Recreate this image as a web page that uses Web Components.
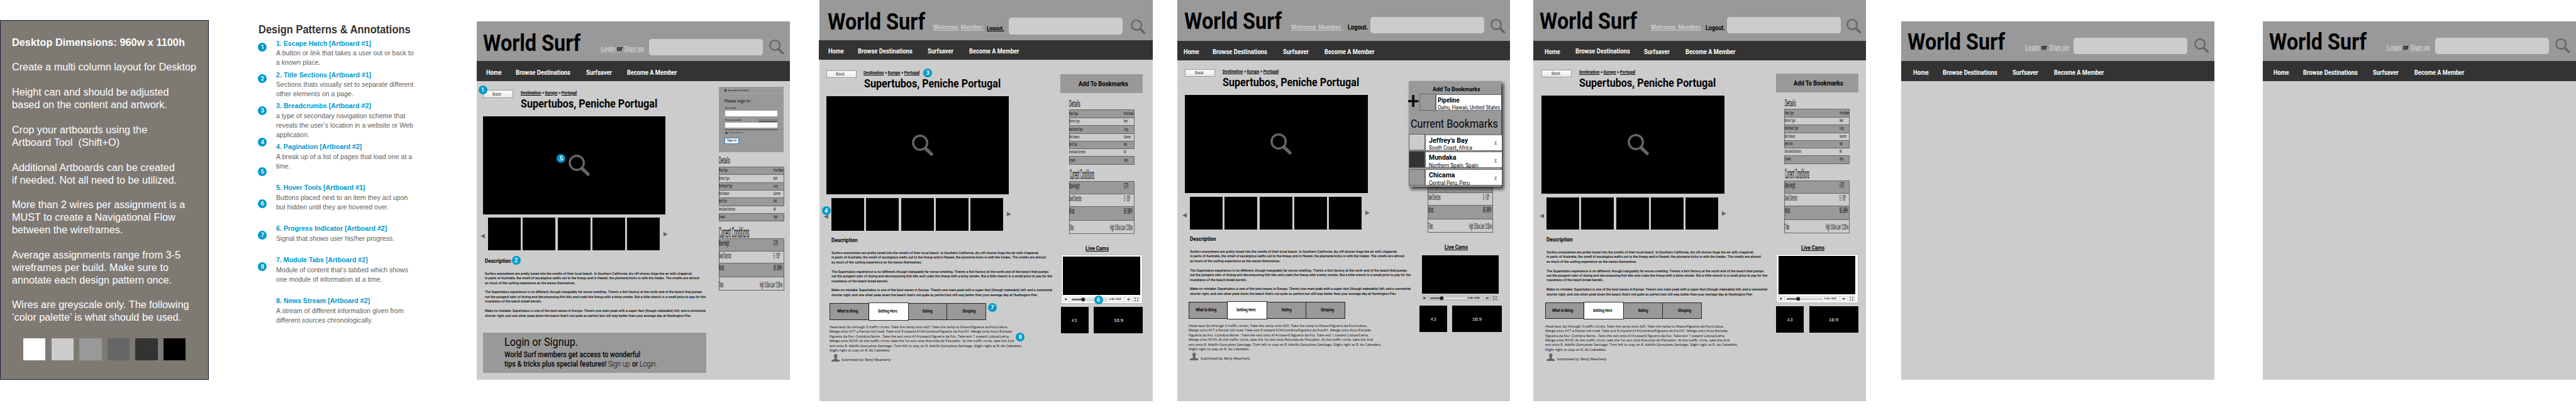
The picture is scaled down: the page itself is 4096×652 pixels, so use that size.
<!DOCTYPE html>
<html lang="en">
<head>
<meta charset="utf-8">
<title>World Surf wireframes</title>
<style>
/* 1rem = 100 design units; the whole canvas is 7898 units wide */
html{font-size:calc(100vw / 78.98);background:#fff;overflow:hidden}
body{margin:0;font-family:Roboto,"Liberation Sans",sans-serif;color:#000}
</style>
</head>
<body>
<design-canvas></design-canvas>
<script>
const r = n => (n / 100).toFixed(4) + 'rem';
const BASE = `*{box-sizing:border-box}:host{display:block}
.col{display:flex;flex-direction:column;align-items:flex-start}
.row{display:flex;align-items:flex-start}
.col>div,.row>div{flex:none}
.b{font-weight:700}.m{font-weight:500}.u{text-decoration:underline}.lt{color:#ccc}
.ar{font-family:"Liberation Sans",Arial,sans-serif}
u{text-decoration:underline}svg{display:block;width:100%;height:100%}`;

/* vertical stack: items are [x, y, height, html], y counted from y0 */
const S = (y0, items) => {
  let p = y0;
  return '<div class="col">' + items.map(([x, y, h, html]) => {
    const m = y - p; p = y + h;
    return `<div style="margin:${r(m)} 0 0 ${r(x)};height:${r(h)}">${html}</div>`;
  }).join('') + '</div>';
};
/* horizontal run: items are [x, y, width, html], x counted from x0 */
const R = (x0, items) => {
  let p = x0;
  return '<div class="row">' + items.map(([x, y, w, html]) => {
    const m = x - p; p = x + w;
    return `<div style="margin:${r(y)} 0 0 ${r(m)};width:${r(w)}">${html}</div>`;
  }).join('') + '</div>';
};
const T = (w, fs, text, cls = '', lh = fs * 1.2) => `<fit-line class="${cls}" w="${w}" fs="${fs}" lh="${lh}">${text}</fit-line>`;
/* text as a stack item / run item, placed by the centre of its capitals */
const st = (x, c, w, fs, text, cls) => [x, c - fs * .6, fs * 1.2, T(w, fs, text, cls)];
const rt = (x, c, w, fs, text, cls) => [x, c - fs * .6, w, T(w, fs, text, cls)];
const box = (w, h, style = 'background:#000', inner = '') => `<div style="width:${r(w)};height:${r(h)};${style}">${inner}</div>`;

class Ui extends HTMLElement {
  constructor() { super(); this.attachShadow({ mode: 'open' }); }
  connectedCallback() { this.shadowRoot.innerHTML = `<style>${BASE}${this.css()}</style>${this.html()}`; }
  css() { return ''; }
  html() { return '<slot></slot>'; }
  get v() { return this.getAttribute('v'); }
}

/* one line of text, condensed or widened to a set width */
const lines = [];
class FitLine extends Ui {
  css() {
    return `:host{width:${r(+this.getAttribute('w'))};height:${r(+this.getAttribute('lh'))};font-size:${r(+this.getAttribute('fs'))};line-height:${r(+this.getAttribute('lh'))};flex:none}
    :host(.b){font-weight:700}:host(.m){font-weight:500}:host(.l){font-weight:300}:host(.u){text-decoration:underline}:host(.lt){color:#ccc}
    :host(.w){color:#fff}:host(.ar){font-family:"Liberation Sans",Arial,sans-serif}:host(.my){font-family:"Open Sans","Noto Sans",sans-serif}
    span{display:inline-block;white-space:pre;transform-origin:0 0;text-decoration:inherit}`;
  }
  html() { return '<span><slot></slot></span>'; }
  connectedCallback() { super.connectedCallback(); lines.push(this); }
  fit() {
    const s = this.shadowRoot.querySelector('span');
    const w = s.getBoundingClientRect().width;
    if (w) s.style.transform = `scaleX(${this.getBoundingClientRect().width / w})`;
  }
}

class PinBadge extends Ui {
  css() { return `:host{width:.27rem;height:.27rem;border-radius:50%;background:#09c;color:#fff;display:flex;align-items:center;justify-content:center;font:600 .19rem/1 Roboto,sans-serif}
    :host([x]){position:absolute;left:${r(+this.getAttribute('x'))};top:${r(+this.getAttribute('y'))}}`; }
}

class SearchIcon extends Ui {
  html() { return `<svg viewBox="0 0 46 46" preserveAspectRatio="none"><circle cx="17.6" cy="17.4" r="15.1" fill="none" stroke="#666" stroke-width="4.6"/><path d="M25.5 31 29.5 26.2 33 28.2 45 40.3Q46.2 42 44.6 43.8 42.6 46 40.3 45.2L28 33.6Z" fill="#666"/></svg>`; }
  css() { return ':host{height:100%}'; }
}

/* left instruction panel */
class BriefPanel extends Ui {
  css() { return `:host{width:6.41rem;height:11.04rem;margin-top:.61rem;background:#7e7973;box-shadow:inset 0 0 0 1px #1c1c3a;color:#fff;flex:none}
    .sw{display:flex;gap:.18rem;padding-left:.715rem}.sw i{width:.68rem;height:.675rem}`; }
  html() {
    const L = [[0, 530, '<b>Desktop Dimensions: 960w x 1100h</b>'], [2, 565, 'Create a multi column layout for Desktop'], [4, 481, 'Height can and should be adjusted'], [5, 476, 'based on the content and artwork.'], [7, 415, 'Crop your artboards using the'], [8, 330, 'Artboard Tool  (Shift+O)'], [10, 499, 'Additional Artboards can be created'], [11, 505, 'if needed. Not all need to be utilized.'], [13, 531, 'More than 2 wires per assignment is a'], [14, 501, 'MUST to create a Navigational Flow'], [15, 340, 'between the wireframes.'], [17, 517, 'Average assignments range from 3-5'], [18, 480, 'wireframes per build. Make sure to'], [19, 490, 'annotate each design pattern once.'], [21, 543, 'Wires are greyscale only. The following'], [22, 519, '‘color palette’ is what should be used.']];
    const it = L.map(([n, w, t]) => st(37.5, 69.7 + n * 38.37, w, 32.5, t, 'ar'));
    it.push([0, 976.5, 68, '<div class="sw">' + ['#fff', '#ccc', '#999', '#666', '#333', '#000'].map(c => `<i style="background:${c}"></i>`).join('') + '</div>']);
    return S(0, it);
  }
}

class PatternNotes extends Ui {
  css() { return `:host{width:5rem;margin-left:1.5rem;flex:none;color:#5e5e5e}
    .t{color:#09c}.h{color:#333}`; }
  html() {
    const D = [[['1. Escape Hatch [Artboard #1]', 291], ['A button or link that takes a user out or back to', 422], ['a known place.', 136]],
    [['2. Title Sections [Artboard #1]', 292], ['Sections thats visually set to separate different', 421], ['other elements on a page.', 237]],
    [['3. Breadcrumbs [Artboard #2]', 291], ['a type of secondary navigation scheme that', 396], ['reveals the user’s location in a website or Web', 420], ['application.', 102]],
    [['4. Pagination [Artboard #2]', 263], ['A break up of a list of pages that load one at a', 417], ['time.', 43], 0],
    [['5. Hover Tools [Artboard #1]', 273], ['Buttons placed next to an item they act upon', 404], ['but hidden until they are hovered over.', 345], 0],
    [['6. Progress Indicator [Artboard #2]', 340], ['Signal that shows user his/her progress.', 363], 0],
    [['7. Module Tabs [Artboard #2]', 281], ['Module of content that’s tabbed which shows', 405], ['one module of information at a time.', 325], 0],
    [['8. News Stream [Artboard #2]', 288], ['A stream of different information given from', 391], ['different sources chronologically.', 296]]];
    let c = 134.7; const it = [];
    D.forEach(g => { g.forEach((l, i) => { if (l) it.push(st(0, c, l[1], 22.3, l[0], i ? 'ar' : 'ar b t')); c += 29.5; }); c += 7.5; });
    const pins = [144.5, 241.5, 338.5, 435.5, 527, 624, 721, 818].map((y, i) => [0, y - 13.5, 27, `<pin-badge>${i + 1}</pin-badge>`]);
    return S(0, [st(1, 92.5, 466, 34, 'Design Patterns &amp; Annotations', 'ar b h')]) + R(0, [[0, 0, 27, S(112.9, pins)], [55.5, 0, 430, S(112.9, it)]]);
  }
}

/* header bars; each version is one artboard's own arrangement */
const HEADS = {
  1: { h: 123, n: 60.5, logo: [19, 66.8], links: 'login', ly: 85.6, s: [528, 54], i: [896, 56.5], nav: [28, 118.5, 334.5, 460], ny: 158.7 },
  2: { h: 124.2, n: 59.8, logo: [24, 67.4], links: [348, 512, 53, 17, 87], ly: 86.2, s: [581, 54.6], i: [954, 59.7], nav: [26, 116.6, 332, 458], ny: 159 },
  3: { h: 125, n: 60, logo: [20, 64.6], links: [348.3, 521.6, 62, 20, 86], ly: 86, s: [591.7, 51.4], i: [960.7, 57], nav: [18.6, 108.4, 324.4, 450], ny: 159.7 },
  4: { h: 126, n: 60, logo: [19.6, 65.6], links: [359.2, 527.6, 59.6, 19.5, 86.5], ly: 86, s: [593.5, 52.6], i: [959, 57], nav: [33.7, 128.4, 339.6, 465.8], ny: 161 },
  5: { h: 123, n: 60.5, logo: [19, 63.5], links: 'login', ly: 82, s: [528, 50.3], i: [897, 53], nav: [36.4, 125.6, 340.4, 467.3], ny: 159 },
  6: { h: 123, n: 60.5, logo: [19, 63.5], links: 'login', ly: 82, s: [528, 50.3], i: [897, 53], nav: [32.4, 123, 337.7, 464.7], ny: 159 }
};
class SiteHeader extends Ui {
  css() {
    const c = HEADS[this.v];
    return `.top{height:${r(c.h)};background:#999;overflow:hidden}.nav{height:${r(c.n)};background:#333;color:#fff;overflow:hidden}
    .q{height:.505rem;border-radius:.09rem;background:#ccc}.i{height:.456rem}
    :host([v="2"]) .nav{margin-left:-.015rem;padding-left:.015rem}`;
  }
  html() {
    const c = HEADS[this.v], L = c.links;
    const links = L === 'login'
      ? [rt(380, c.ly, 45.5, 19.5, 'Login', 'b u lt'), rt(430, c.ly, 16.5, 19.5, 'or', 'b'), rt(451.5, c.ly, 61.5, 19.5, 'Sign up', 'b u lt')]
      : [rt(L[0], c.ly, 156, 20.5, this.v === '2' ? '<u>Welcome,</u> <u>Member.</u>' : '<u>Welcome, Member.</u>', 'b lt'), rt(L[1], L[4], L[2], L[3], 'Logout.', this.v === '2' ? 'b u' : 'b')];
    const names = ['Home', 'Browse Destinations', 'Surfsaver', 'Become A Member'], ws = [47.6, 167.5, 79, 153.3];
    return `<div class="top">${R(0, [rt(c.logo[0], c.logo[1], 299, 73, 'World Surf', 'b'), ...links, [c.s[0], c.s[1], 349, '<div class="q"></div>'], [c.i[0], c.i[1], 46, '<div class="i"><search-icon></search-icon></div>']])}</div>
    <div class="nav">${R(0, names.map((n, k) => rt(c.nav[k], c.ny - c.h - (this.v === '4' && k === 1 ? 2 : 0), ws[k], 20, n, 'b')))}</div>`;
  }
}

/* key/value tables of the side column */
class SpecTable extends Ui {
  css() { return `:host{width:2.005rem}
    .r{box-shadow:inset 0 1px #666,inset 1px 0 #666,inset -1px 0 #666}.g{background:#999}
    .z{box-shadow:inset 0 0 0 1px #666}.n{box-shadow:none}small{font-size:.76em}`; }
  html() {
    const det = this.v === 'details';
    const rows = det ? [['Wave Type:', 28, 'Point Break', 29.3], ['Bottom Type:', 33.3, 'Reef', 11.7], ['Best Board Type:', 42, 'Long', 12.7], ['Best Season:', 32.3, 'Summer', 21.3], ['Best Tide:', 25, 'Mid', 9.3], ['Best Swell Direction:', 51.3, 'NE', 7.3], ['Crowds:', 19.7, 'High', 11.7]]
      : [['Wave Height:', 33, '5-7Ft.', 15], ['Swell Direction:', 39, 'E - 150º', 19.5], ['Winds:', 17, 'NE- 5MPH', 26], ['Tides:', 15, 'High: 5:00<small>AM</small> Low: 12:00<small>PM</small>', 69.5]];
    const e = det ? [0, 24.3, 48, 71.7, 95.5, 121.6, 142.6, 169] : [0, 38.5, 76.4, 118.8, 161.5];
    const c = det ? [0, 1, 2, 3, 4, 5, 6].map(i => 11.7 + i * 23.65) : [16.5, 55, 93.1, 144];
    const fs = det ? 14.5 : 24;
    return rows.map(([k, kw, v, vw], i) => {
      const none = det && i === 5, last = i === rows.length - 1 || (det && i === 4);
      const y = c[i] - e[i];
      return `<div class="r ${i % 2 ? '' : 'g'} ${last ? 'z' : ''} ${none ? 'n' : ''}" style="height:${r(e[i + 1] - e[i])}">${R(0, [rt(.5, y, kw, fs, k), rt(!det && i === 3 ? 126 : 168.2, y, vw, fs, v)])}</div>`;
    }).join('');
  }
}

class SignIn extends Ui {
  css() { return `:host{width:2rem;height:2.003rem;background:#999;border-radius:.025rem;color:#333;font-family:"Liberation Sans",Arial,sans-serif}
    .in{background:#fff;width:1.61rem;height:.168rem;border-radius:.015rem}
    .btn{background:#fff;border:1px solid #2a78b8;border-radius:.012rem;width:.44rem;height:.183rem}`; }
  html() {
    return S(0, [
      [17.3, 6.6, 10, R(0, [[0, 0, 7, `<div style="height:.085rem"><svg viewBox="0 0 7 8.5"><path d="M0 3.6H7V8.5H0Z" fill="#333"/><path d="M1.5 4V2.6a2 2 0 0 1 4 0V4" fill="none" stroke="#333" stroke-width="1.2"/></svg></div>`], rt(10.3, 5, 64.7, 7, 'Secured Connection', 'b')])],
      [0, 20, 1, box(200, 1, 'background:#a6a6a6')],
      st(18.3, 43.7, 85, 12.3, 'Please sign in :', 'b'),
      st(19, 67.3, 36, 7.6, 'Your email', 'b'),
      [19.3, 74, 16.8, '<div class="in"></div>'],
      [19, 98, 9.4, R(0, [rt(0, 5, 51.7, 7.6, 'Your password', 'b'), rt(103.7, 4.6, 57, 7, 'I forgot my password', 'u')])],
      [19.3, 109.8, 16.8, '<div class="in"></div>'],
      [0, 130, 1, box(200, 1, 'background:#8a8a8a')],
      [19.3, 132, 1.7, box(161, 1.7, 'background:#444')],
      [20.5, 137, 9, R(0, [[0, 2, 6.5, box(6.5, 6.5, 'background:#333;border-radius:50%')], rt(11, 5, 44, 7, 'Remember me')])],
      [19, 157, 18.3, '<div class="btn">' + R(0, [rt(5.5, 7.3, 29, 9, 'Sign in', 'b')]) + '</div>']
    ]);
  }
}

/* photo, thumbnail strip and the description text */
const COPY = [[0, 635.5, 'Surfers everywhere are pretty tuned into the smells of their local beach. In Southern California, dry off-shores tinge the air with chaparral;'], [1, 657.6, 'in parts of Australia, the smell of eucalyptus wafts out to the lineup and in Hawaii, the plumeria kicks in with the trades. The smells are almost'], [2, 277.8, 'as much of the surfing experience as the waves themselves.'], [4, 666, 'The Supertubos experience is no different, though inarguably far worse smelling. There’s a fish factory at the north end of the beach that pumps'], [5, 677, 'out the pungent odor of drying and decomposing fish bits and coats the lineup with a briny smoke. But a little stench is a small price to pay for the'], [6, 175, 'roundness of the beach break barrels.'], [8, 677, 'Make no mistake: Supertubos is one of the best waves in Europe. There’s one main peak with a super-fast (though makeable) left, and a somewhat'], [9, 633, 'shorter right, and one other peak down the beach that’s not quite as perfect but still way better than your average day at Huntington Pier.']];
class PlaceStory extends Ui {
  css() { return `.back{width:.93rem;height:.24rem;border:1px solid #999;background:linear-gradient(#fff,#e6e6e6);color:#333}
    .hero{width:5.607rem;height:3rem;background:#000;padding:1.17rem 0 0 2.63rem}.hero div{width:.66rem;height:.66rem}
    .a{height:.137rem}`; }
  html() {
    const guest = this.v === 'guest', p = guest ? 24.5 : 36;
    const arrow = d => `<div class="a"><svg viewBox="0 0 13 13" preserveAspectRatio="none"><path d="${d}" fill="#666"/></svg></div>`;
    /* y = 0 is the top edge of the Back button */
    return S(0, [
      [20, 0, 64, R(0, [[0, 0, 93, '<div class="back">' + R(0, [rt(28, 11, 27, 13, 'Back', 'ar')]) + '</div>'],
        [115.5, 0, 420, S(0, [st(0, 8.3, 172, 13, '<u>Destination</u> &gt; <u>Europe</u> &gt; <u>Portugal</u>', 'b'), st(.5, 41.3, 419, 35.5, 'Supertubos, Peniche Portugal', 'b')])]])],
      [20, 80.2, 300, '<div class="hero"><div><search-icon></search-icon></div></div>'],
      [13, 391.5, 100, R(0, [[0, 50, 13.5, arrow('M13 0V13L0 6.5Z')], [23, 0, 100, box(100, 100)], [129, 0, 100, box(100, 100)], [237, 0, 100, box(100, 100)], [343, 0, 100, box(100, 100)], [449, 0, 100, box(100, 100)], [560.3, 43.6, 13.5, arrow('M0 0V13L13 6.5Z')]])],
      st(p + (guest ? 1.7 : 0), guest ? 523 : 520.7, 80.3, 18, 'Description', 'b'),
      ...COPY.map(([n, w, t]) => st(p + (guest ? 1.7 : 0), (guest ? 561.2 : 558.9) + n * 14.4, w, 11.8, t, 'm'))
    ]);
  }
}

class TravelTabs extends Ui {
  css() { return `.tabs{display:flex;width:4.805rem;height:.508rem;box-shadow:inset 0 0 0 1px #222;background:#999}
    .tabs>div{width:25%;border-right:1px solid #222}.tabs>div:last-child{border:0}.tabs>.on{background:#fff;border:0;box-shadow:0 0 0 .015rem #000}.ic{height:.236rem}`; }
  html() {
    const tabs = [['What to Bring', 21.8, 64.5], ['Getting Here', 27.2, 59], ['Eating', 44.6, 30], ['Sleeping', 45.8, 40.7]];
    const dir = [[547, 'Head east Go through 3 traffic circles. Take the ramp onto A25. Take the ramp to Ílhavo/Figueira da Foz/Lisboa,'], [559, 'Merge onto A17 a Partial toll road. Take exit 8 toward A14/Coimbra/Figueira da Foz/A1. Merge onto Auto-Estrada'], [552, 'Figueira da Foz- Coimbra Norte . Take the exit onto A14 toward Figueira da Foz. Take exit 1 toward Lisboa/Leiria.'], [565, 'Merge onto N109 .At the traffic circle, take the 1st exit onto Rotunda do Pescador. At the traffic circle, take the 2nd'], [590.5, 'exit onto R. Adolfo Gonçalves Santiago. Turn left to stay on R. Adolfo Gonçalves Santiago. Slight right at R. do Cabedelo.'], [187.3, 'Slight right to stay on R. do Cabedelo.']];
    return S(0, [
      [31, 0, 50.8, '<div class="tabs">' + tabs.map(([t, x, w], i) => `<div class="${i === 1 ? 'on' : ''}">${R(0, [rt(x, 26, w, 12.6, t, 'b')])}</div>`).join('') + '</div>'],
      ...dir.map(([w, t], i) => st(31, 73.5 + i * 14.4, w, 11.6, t, 'my m')),
      [36, 155.6, 24, R(0, [[0, 0, 26, '<div class="ic"><svg viewBox="0 0 26 24" preserveAspectRatio="none"><path d="M13 0c4 0 5.600 2.500 5.200 6-.2 3-1.700 5.500-1.900 7.800 0 2.200 1.500 2.900 4.700 3.600 3.500.8 5 1.600 5 6.600H0c0-5 1.500-5.800 5-6.600 3.200-.7 4.700-1.400 4.700-3.600C9.500 11.500 8 9 7.800 6 7.400 2.500 9 0 13 0Z" fill="#666"/></svg></div>'], rt(31.5, 18.6, 151, 11.6, 'Submitted by: Benji Weatherly', 'my m')])]
    ]);
  }
}

class CamPlayer extends Ui {
  css() { return `.f{width:2.513rem;height:1.51rem;border-radius:.02rem;background:#fff;box-shadow:inset 0 0 0 1px #b4b4b4}
    :host([plain]) .f{background:none;box-shadow:none}
    .bar{width:2.37rem;height:.157rem}.box{background:#000;color:#fff;height:.803rem}`; }
  html() {
    const track = this.hasAttribute('plain') ? '#fff' : '#e4e4e4';
    const bar = `<svg viewBox="0 0 237 15.7"><rect x=".7" y=".7" width="235.6" height="14.300" rx="1.5" fill="none" stroke="#999"/><path d="M20.300.7V15M190 .7V15M214 .7V15" stroke="#999" fill="none"/><path d="M6.700 4V11.700L14.200 7.800Z" fill="#222"/><rect x="27" y="6" width="111" height="4.600" rx="2.300" fill="${track}" stroke="#888" stroke-width=".9"/><rect x="27" y="6" width="37" height="4.600" rx="1" fill="#666"/><circle cx="62.300" cy="8.200" r="5.700" fill="#222"/><path d="M197.500 6.300h2.400l3-2.500v8.400l-3-2.500h-2.400Z" fill="#333"/><path d="M204.500 5.500q1.600 2.500 0 5M206.500 4.500q2.500 3.500 0 7" fill="none" stroke="#444" stroke-width=".9"/><path d="M220 3h4l-1.300 1.300 2 2-1 1-2-2L220 6.600ZM231.500 3h-4l1.300 1.300-2 2 1 1 2-2 1.700 1.300ZM220 13.500h4l-1.300-1.300 2-2-1-1-2 2L220 9.900ZM231.500 13.500h-4l1.300-1.300-2-2 1-1 2 2 1.700-1.300Z" fill="#333"/></svg>`;
    return `<div class="f">${S(0, [[7.4, 6.4, 116.3, box(236, 116.3)], [6, 128.4, 15.7, `<div class="bar"><div style="display:grid"><div style="grid-area:1/1;height:.157rem">${bar}</div><div style="grid-area:1/1">${R(0, [rt(142.6, 8.3, 36, 7, '0:00 / 4:59', 'b ar')])}</div></div></div>`]])}</div>`
      + `<div style="margin-top:.097rem">${R(0, [[0, 0, 85, '<div class="box">' + R(0, [rt(34, 41.3, 16, 15, '4:3', 'ar')]) + '</div>'], [101, 0, 150.7, '<div class="box">' + R(0, [rt(61.3, 41.3, 29, 15, '16:9', 'ar')]) + '</div>']])}</div>`;
  }
}

class BookmarkPanel extends Ui {
  css() { return `:host{position:absolute;left:7.09rem;top:2.49rem;width:2.84rem;height:3.235rem;background:#999;box-shadow:.06rem .06rem .1rem .01rem rgba(0,0,0,.7)}
    .th{width:.505rem;height:.51rem;border:1px solid #666}.w{background:#fff;border:1px solid #666;border-right:0;height:.505rem;margin-top:.015rem}
    .x{height:.14rem}`; }
  html() {
    const row = (col, n, nw, p, pw) => R(0, [[0, 0, 50.5, `<div class="th" style="background:${col}"></div>`], [50.5, 0, 233.5, '<div class="w">' + R(0, [[8, 0, 187, S(0, [st(0, 17, nw, 22, n, 'b'), st(0, 40, pw, 17, p, '')])], [209, 18.5, 8, '<div class="x"><svg viewBox="0 0 8 14" preserveAspectRatio="none"><path d="M1 1 7 13M7 1 1 13" stroke="#999" stroke-width="2.600"/></svg></div>']]) + '</div>']]);
    return S(0, [
      st(73, 24.6, 146, 19, 'Add To Bookmarks', 'b'),
      [0, 38.5, 51.5, R(0, [[-1, 3, 32, '<div style="height:.38rem"><svg viewBox="0 0 32 38"><path d="M12.300 0h7v16h12.700v6H19.300v16h-7V22H0v-6h12.300Z"/></svg></div>'], [33, 0, 50, '<div class="th" style="background:#999"></div>'], [83, 0, 201, '<div class="w">' + R(0, [[3, 0, 192, S(0, [st(0, 17.5, 66.6, 20, 'Pipeline', 'b'), st(0, 40, 192, 17, 'Oahu, Hawaii, United States')])]]) + '</div>']])],
      st(5.5, 131.4, 268, 35.5, 'Current Bookmarks'),
      [.5, 161.4, 51, row('#ccc', 'Jeffrey’s Bay', 120, 'South Coast, Africa', 133)],
      [.5, 214.5, 51, row('#333', 'Mundaka', 84, 'Northern Spain, Spain', 151.5)],
      [.5, 269, 51, row('#999', 'Chicama', 80, 'Central Peru, Peru', 125.6)]
    ]);
  }
}

class ArtBoard extends Ui {
  css() {
    const g = n => +this.getAttribute(n);
    return `:host{position:relative;flex:none;background:#ccc;width:${r(g('w'))};height:${r(g('h'))};margin:${r(g('top'))} 0 0 ${r(g('gap'))}}
    .add{width:2.52rem;height:.585rem;background:#999}.cta{width:6.83rem;height:1.24rem;background:#999}`;
  }
  html() {
    const v = this.v, c = HEADS[v], y0 = c.h + c.n, head = `<site-header v="${v}"></site-header>`;
    if (v > 4) return head;
    if (v === '1') {
      const cta = S(0, [st(64, 28.6, 225.7, 34.5, 'Login or Signup.'), st(64, 68.7, 417, 24, 'World Surf members get access to wonderful', 'm'),
        [64, 83.4, 28.8, R(0, [rt(0, 14.4, 313, 24, 'tips &amp; tricks plus special features!', 'm'), rt(319, 14.4, 67, 24, 'Sign up', 'l'), rt(392.5, 14.4, 18, 24, 'or', 'm'), rt(416.5, 14.4, 54.5, 24, 'Login.', 'l')])]]);
      return head + R(0, [[-1.7, 0, 735, S(y0, [[0, 211.5, 710, '<place-story v="guest"></place-story>'], [21.3, 955, 124, `<div class="cta">${cta}</div>`]])],
        [741.3, 0, 201, S(y0, [[0, 201, 200.3, '<sign-in></sign-in>'], st(.5, 428.3, 34.3, 30, 'Details'), [0, 445.7, 169, '<spec-table v="details"></spec-table>'], st(.5, 647, 93.5, 47, 'Current Conditions'), [0, 665.2, 161.5, '<spec-table v="now"></spec-table>']])]])
        + '<pin-badge x="4.7" y="197">1</pin-badge><pin-badge x="245.500" y="408">5</pin-badge><pin-badge x="107" y="720">2</pin-badge>';
    }
    const [dx, dy] = { 2: [0, 0], 3: [2.8, -3.9], 4: [4.9, -2.2] }[v];
    const side = [];
    if (v !== '3') side.push([0, 227.4, 58.5, '<div class="add">' + R(0, [rt(54.7, 32.4, 152, 20, 'Add To Bookmarks', 'b')]) + '</div>'], st(26.7, 318.7, 34, 30, 'Details'), [26, 336.5, 169, '<spec-table v="details"></spec-table>'], st(28, 535.8, 75, 41, 'Current Conditions'));
    side.push([26, 556, 161.5, '<spec-table v="now"></spec-table>'], st(76.5, 761.7, 71.5, 18.3, 'Live Cams', 'b u'), [.5, 781.3, 241, `<cam-player ${v === '3' ? 'plain' : ''}></cam-player>`]);
    return head + R(0, [[dx, dy, 738.8, S(y0, [[0, 215.5, 710, '<place-story v="member"></place-story>'], [0, 930, 180, '<travel-tabs></travel-tabs>']])], [738.8 + dx, dy, 252, S(y0, side)]])
      + (v === '3' ? '<bookmark-panel></bookmark-panel>' : '')
      + (v === '2' ? '<pin-badge x="318" y="209.600">3</pin-badge><pin-badge x="6.500" y="632">4</pin-badge><pin-badge x="841.500" y="906.300">6</pin-badge><pin-badge x="515.800" y="929">7</pin-badge><pin-badge x="602" y="1020">8</pin-badge>' : '');
  }
}

class DesignCanvas extends Ui {
  css() { return ':host{display:flex;align-items:flex-start;width:78.98rem;height:12.57rem;background:#fff;overflow:hidden}'; }
  html() {
    return `<brief-panel></brief-panel><pattern-notes></pattern-notes>
    <art-board v="1" w="960" h="1100" top="65" gap="171"></art-board>
    <art-board v="2" w="1021" h="1230" top="0" gap="91"></art-board>
    <art-board v="3" w="1020" h="1230" top="0" gap="76.300"></art-board>
    <art-board v="4" w="1020" h="1230" top="0" gap="71.400"></art-board>
    <art-board v="5" w="960" h="1100" top="65" gap="108.300"></art-board>
    <art-board v="6" w="961" h="1100" top="65" gap="147.600"></art-board>`;
  }
}

Object.entries({ 'fit-line': FitLine, 'pin-badge': PinBadge, 'search-icon': SearchIcon, 'brief-panel': BriefPanel, 'pattern-notes': PatternNotes, 'site-header': SiteHeader, 'spec-table': SpecTable, 'sign-in': SignIn, 'place-story': PlaceStory, 'travel-tabs': TravelTabs, 'cam-player': CamPlayer, 'bookmark-panel': BookmarkPanel, 'art-board': ArtBoard, 'design-canvas': DesignCanvas })
  .forEach(([n, c]) => customElements.define(n, c));
lines.forEach(l => l.fit());
</script>
</body>
</html>
